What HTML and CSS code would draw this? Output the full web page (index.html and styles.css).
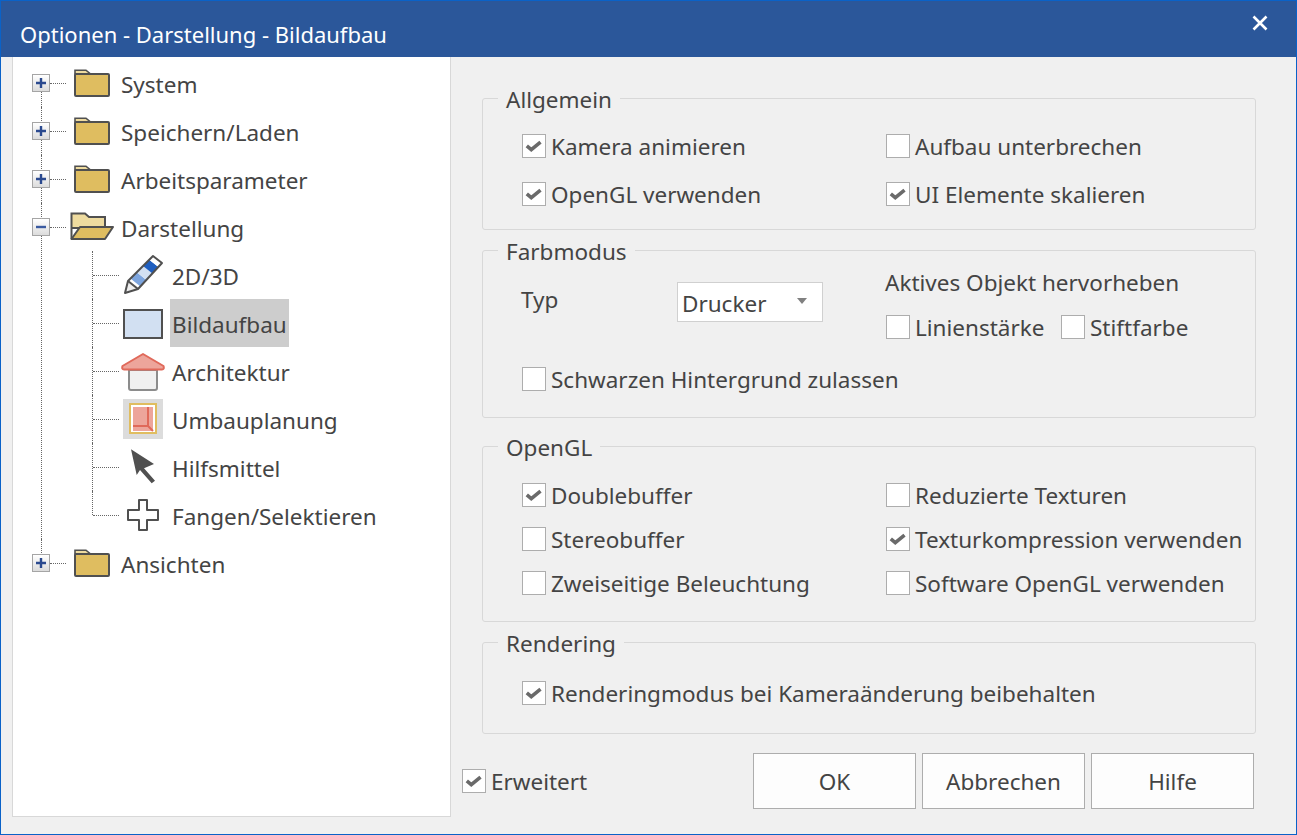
FILE: index.html
```html
<!DOCTYPE html>
<html lang="de">
<head>
  <meta charset="UTF-8" />
  <title>Optionen - Darstellung - Bildaufbau</title>
  <link rel="stylesheet" href="styles.css">
</head>
<body>
  <svg class="sprite" aria-hidden="true">
    <symbol id="folder" viewBox="0 0 44 48">
      <path d="M5 14V10.2H16L20.5 14Z" fill="#eedb9f" stroke="#505050" stroke-width="1.6"/>
      <rect x="5" y="14" width="34" height="22" rx="1" fill="#dfbd60" stroke="#505050" stroke-width="2"/>
    </symbol>
    <symbol id="plus" viewBox="0 0 10 10">
      <path d="M0 5H10M5 0V10" stroke="#2b4a8f" stroke-width="2.4"/>
    </symbol>
    <symbol id="tick" viewBox="0 0 22 22">
      <path d="M3.800 10.800L8.300 14.600L17.500 7.200" fill="none" stroke="#6a6a6a" stroke-width="3.6"/>
    </symbol>
  </svg>

  <div class="window">
    <header class="titlebar">
      <span class="title">Optionen - Darstellung - Bildaufbau</span>
      <svg class="close" viewBox="0 0 16 16"><path d="M1.5 1.5L14.5 14.5M14.5 1.5L1.5 14.5" stroke="#fff" stroke-width="2.6"/></svg>
    </header>

    <div class="content">
      <!-- Baum links -->
      <nav class="tree-panel">
        <ul class="tree">
          <li class="node first">
            <div class="row">
              <span class="expander"><svg><use href="#plus"/></svg></span>
              <svg class="icon"><use href="#folder"/></svg>
              <span class="label">System</span>
            </div>
          </li>
          <li class="node">
            <div class="row">
              <span class="expander"><svg><use href="#plus"/></svg></span>
              <svg class="icon"><use href="#folder"/></svg>
              <span class="label">Speichern/Laden</span>
            </div>
          </li>
          <li class="node">
            <div class="row">
              <span class="expander"><svg><use href="#plus"/></svg></span>
              <svg class="icon"><use href="#folder"/></svg>
              <span class="label">Arbeitsparameter</span>
            </div>
          </li>
          <li class="node">
            <div class="row">
              <span class="expander"><svg viewBox="0 0 10 10"><path d="M0 5H10" stroke="#3a5aa0" stroke-width="2.4"/></svg></span>
              <svg class="icon" viewBox="0 0 44 48">
                <path d="M1.5 35V9.5H15L19 13H35V24H1.5Z" fill="#eedb9f" stroke="#505050" stroke-width="2"/>
                <path d="M1.5 35L10 23H43L35 35Z" fill="#dfbd60" stroke="#505050" stroke-width="2" stroke-linejoin="round"/>
              </svg>
              <span class="label">Darstellung</span>
            </div>
            <ul class="children">
              <li class="leaf">
                <div class="row">
                  <svg class="icon" viewBox="0 0 44 48">
                    <g transform="translate(3 3)" stroke-linejoin="round">
                      <path d="M1 38L4 26L14 34Z" fill="#eee"/>
                      <path d="M6.5 23.5L12.75 17.25L22.4 24.9L16.4 31.4Z" fill="#7da5de"/>
                      <path d="M12.75 17.25L19 11L28.4 18.4L22.4 24.9Z" fill="#d2e0f2"/>
                      <path d="M19 11L25.25 4.75L34.4 11.9L28.4 18.4Z" fill="#1f5fc0"/>
                      <path d="M25.25 4.75L29 1L38 8L34.4 11.9Z" fill="#fff"/>
                      <path d="M1 38L4 26L29 1L38 8L14 34Z" fill="none" stroke="#505050" stroke-width="2"/>
                      <path d="M4 26L14 34" fill="none" stroke="#505050" stroke-width="2"/>
                    </g>
                  </svg>
                  <span class="label">2D/3D</span>
                </div>
              </li>
              <li class="leaf">
                <div class="row">
                  <svg class="icon" viewBox="0 0 44 48">
                    <rect x="3" y="10" width="38" height="28" fill="#d2e0f2" stroke="#505050" stroke-width="2"/>
                  </svg>
                  <span class="label selected">Bildaufbau</span>
                </div>
              </li>
              <li class="leaf">
                <div class="row">
                  <svg class="icon" viewBox="0 0 44 48">
                    <path d="M8 22H36V40Q36 42 34 42H10Q8 42 8 40Z" fill="#f0f0f0" stroke="#8c8c8c" stroke-width="2"/>
                    <path d="M22 6L42.5 18Q43.5 21.5 41 21.5H3Q0.500 21.500 1.500 18Z" fill="#eda59b" stroke="#e0695a" stroke-width="2" stroke-linejoin="round"/>
                  </svg>
                  <span class="label">Architektur</span>
                </div>
              </li>
              <li class="leaf">
                <div class="row">
                  <svg class="icon" viewBox="0 0 44 48">
                    <rect x="2" y="3" width="40" height="40" fill="#dcdcdc"/>
                    <rect x="9" y="8" width="26" height="29" fill="#fff" stroke="#e0bd60" stroke-width="2"/>
                    <rect x="12" y="11" width="20" height="24" fill="#eda59b"/>
                    <path d="M27 11V30H12M27 30L32 35" fill="none" stroke="#e0695a" stroke-width="2"/>
                  </svg>
                  <span class="label">Umbauplanung</span>
                </div>
              </li>
              <li class="leaf">
                <div class="row">
                  <svg class="icon" viewBox="0 0 44 48">
                    <path d="M10 5.300L33 20L23 24.300L34 36.700L30.700 39.300L19 26L15.700 31Z" fill="#505050"/>
                  </svg>
                  <span class="label">Hilfsmittel</span>
                </div>
              </li>
              <li class="leaf last">
                <div class="row">
                  <svg class="icon" viewBox="0 0 44 48">
                    <path d="M18 8H26V18H37V28H26V38H18V28H7V18H18Z" fill="#fff" stroke="#505050" stroke-width="2" stroke-linejoin="round"/>
                  </svg>
                  <span class="label">Fangen/Selektieren</span>
                </div>
              </li>
            </ul>
          </li>
          <li class="node last">
            <div class="row">
              <span class="expander"><svg><use href="#plus"/></svg></span>
              <svg class="icon"><use href="#folder"/></svg>
              <span class="label">Ansichten</span>
            </div>
          </li>
        </ul>
      </nav>

      <!-- Einstellungen rechts -->
      <main class="settings">
        <fieldset class="group">
          <legend>Allgemein</legend>
          <div class="check-grid">
            <label class="check"><span class="box"><svg><use href="#tick"/></svg></span>Kamera animieren</label>
            <label class="check"><span class="box"></span>Aufbau unterbrechen</label>
            <label class="check"><span class="box"><svg><use href="#tick"/></svg></span>OpenGL verwenden</label>
            <label class="check"><span class="box"><svg><use href="#tick"/></svg></span>UI Elemente skalieren</label>
          </div>
        </fieldset>

        <fieldset class="group group-farbe">
          <legend>Farbmodus</legend>
          <div class="farb-top">
            <div class="farb-typ">
              <span class="typ-label">Typ</span>
              <div class="combo">Drucker<span class="combo-arrow"></span></div>
            </div>
            <div class="farb-aktiv">
              <div class="aktiv-title">Aktives Objekt hervorheben</div>
              <div class="aktiv-checks">
                <label class="check check-linie"><span class="box"></span>Linienstärke</label>
                <label class="check"><span class="box"></span>Stiftfarbe</label>
              </div>
            </div>
          </div>
          <label class="check check-schwarz"><span class="box"></span>Schwarzen Hintergrund zulassen</label>
        </fieldset>

        <fieldset class="group group-opengl">
          <legend>OpenGL</legend>
          <div class="check-grid dense">
            <label class="check"><span class="box"><svg><use href="#tick"/></svg></span>Doublebuffer</label>
            <label class="check"><span class="box"></span>Reduzierte Texturen</label>
            <label class="check"><span class="box"></span>Stereobuffer</label>
            <label class="check"><span class="box"><svg><use href="#tick"/></svg></span>Texturkompression verwenden</label>
            <label class="check"><span class="box"></span>Zweiseitige Beleuchtung</label>
            <label class="check"><span class="box"></span>Software OpenGL verwenden</label>
          </div>
        </fieldset>

        <fieldset class="group group-render">
          <legend>Rendering</legend>
          <label class="check check-render"><span class="box"><svg><use href="#tick"/></svg></span>Renderingmodus bei Kameraänderung beibehalten</label>
        </fieldset>

        <footer class="footer">
          <label class="check"><span class="box"><svg><use href="#tick"/></svg></span>Erweitert</label>
          <div class="buttons">
            <button type="button">OK</button>
            <button type="button">Abbrechen</button>
            <button type="button">Hilfe</button>
          </div>
        </footer>
      </main>
    </div>
  </div>
</body>
</html>
```

FILE: styles.css
```css
html, body {
  height: 100%;
  margin: 0;
  overflow: hidden;
}
body {
  font-family: "Noto Sans", "Open Sans", sans-serif;
  font-size: 22.5px;
  color: #444;
}
.sprite {
  display: none;
}
.window {
  height: 835px;
  box-sizing: border-box;
  border: 1px solid #0a62c8;
  background-color: #f0f0f0;
  display: flex;
  flex-direction: column;
}

/* Titelleiste */
.titlebar {
  height: 56px;
  flex: none;
  background-color: #2b579a;
  color: #fff;
  display: flex;
  justify-content: space-between;
  padding: 14px 28px 0 19px;
  box-sizing: border-box;
}
.title {
  align-self: flex-end;
  padding-bottom: 8px;
  font-size: 22px;
}
.close {
  width: 16px;
  height: 16px;
}

.content {
  flex: 1;
  display: flex;
  padding: 0 0 17px 11px;
  min-height: 0;
}

/* Baum */
.tree-panel {
  width: 439px;
  flex: none;
  box-sizing: border-box;
  background-color: #fff;
  border: 1px solid #d8d8d8;
  border-top: none;
}
.tree, .children {
  list-style: none;
  margin: 0;
  padding: 0;
}
.tree {
  padding-top: 2px;
}
.node, .leaf {
  position: relative;
}
.node::before, .leaf::before {
  content: "";
  position: absolute;
  top: 0;
  bottom: 0;
  border-left: 1px dotted #666;
}
.node::before {
  left: 28px;
}
.leaf::before {
  left: 79px;
}
.node.first::before {
  top: 24px;
}
.node.last::before, .leaf.last::before {
  bottom: auto;
  height: 24px;
}
.row {
  position: relative;
  height: 48px;
  display: flex;
  align-items: center;
  padding-left: 19px;
}
.row::before {
  content: "";
  position: absolute;
  top: 24px;
  left: 37px;
  width: 16px;
  border-top: 1px dotted #666;
}
.leaf .row {
  padding-left: 108px;
}
.leaf .row::before {
  left: 80px;
  width: 26px;
}
.expander {
  position: relative;
  width: 18px;
  height: 18px;
  box-sizing: border-box;
  margin-right: 20px;
  border: 1px solid #a5a5a5;
  background: linear-gradient(#fff, #dcdcdc);
  display: flex;
  align-items: center;
  justify-content: center;
}
.expander svg {
  width: 10px;
  height: 10px;
}
.icon {
  width: 44px;
  height: 48px;
  flex: none;
  margin: 2px 5px 0 0;
}
.label {
  height: 48px;
  line-height: 52px;
  padding: 0 2px;
}
.selected {
  background-color: #cdcdcd;
}

/* Gruppen rechts */
.settings {
  flex: 1;
  padding: 26px 40px 0 31px;
  min-width: 0;
}
.group {
  margin: 0 0 5px;
  padding: 9px 0 11px 39px;
  border: 1px solid #d8d8d8;
  border-radius: 3px;
  min-width: 0;
}
.group legend {
  margin-left: -24px;
  padding: 2px 8px 0;
  height: 30px;
  box-sizing: border-box;
  line-height: 30px;
}
.group-farbe {
  margin-bottom: 13px;
  padding: 0 0 14px 39px;
}
.group-opengl {
  padding: 12px 0 16px 39px;
}
.group-render {
  padding: 12px 0 16px 39px;
  margin-bottom: 0;
}
.check-grid {
  display: grid;
  grid-template-columns: 364px 1fr;
  grid-auto-rows: 48px;
}
.check-grid.dense {
  grid-auto-rows: 44px;
}
.check {
  display: flex;
  align-items: center;
  height: 48px;
  white-space: nowrap;
}
.dense .check {
  height: 44px;
}
.box {
  width: 24px;
  height: 24px;
  flex: none;
  box-sizing: border-box;
  border: 1px solid #adadad;
  background-color: #fff;
  margin-right: 5px;
}
.box svg {
  display: block;
  width: 22px;
  height: 22px;
}

/* Farbmodus */
.farb-top {
  display: flex;
}
.farb-typ {
  width: 364px;
  padding-top: 17px;
  display: flex;
  align-items: flex-start;
}
.typ-label {
  width: 155px;
  margin-left: -1px;
  padding-right: 1px;
  line-height: 36px;
}
.combo {
  width: 146px;
  height: 40px;
  box-sizing: border-box;
  border: 1px solid #d0d0d0;
  background-color: #fff;
  padding-left: 4px;
  line-height: 41px;
  position: relative;
}
.combo-arrow {
  position: absolute;
  top: 15px;
  right: 15px;
  border-left: 5px solid transparent;
  border-right: 5px solid transparent;
  border-top: 6px solid #808080;
}
.aktiv-title {
  height: 38px;
  line-height: 36px;
  margin-left: -1px;
}
.aktiv-checks {
  display: flex;
}
.check-linie {
  width: 175px;
}
.check-schwarz {
  margin-top: 4px;
}

/* Fusszeile */
.footer {
  display: flex;
  justify-content: space-between;
  align-items: center;
  margin: 19px 2px 0 -20px;
}
.buttons {
  display: flex;
  gap: 6px;
}
.buttons button {
  width: 163px;
  height: 56px;
  box-sizing: border-box;
  border: 1px solid #adadad;
  background-color: #fdfdfd;
  font: inherit;
  color: inherit;
  padding: 0;
}
```
